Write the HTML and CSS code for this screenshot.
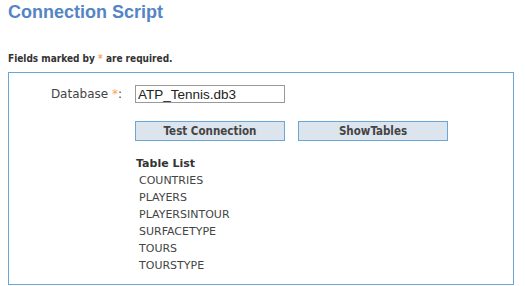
FILE: index.html
```html
<!DOCTYPE html>
<html>
<head>
  <link rel="stylesheet" href="styles.css">
</head>
<body>
  <h1 class="title">Connection Script</h1>
  <p class="note">Fields marked by <span class="req">*</span> are required.</p>
  <div class="panel">
    <div class="row">
      <label class="label" for="db">Database <span class="req">*</span>:</label>
      <input class="field" id="db" value="ATP_Tennis.db3">
    </div>
    <div class="buttons">
      <button class="btn">Test Connection</button>
      <button class="btn">ShowTables</button>
    </div>
    <div class="tables">
      <div class="tables-title">Table List</div>
      <div class="table-item">COUNTRIES</div>
      <div class="table-item">PLAYERS</div>
      <div class="table-item">PLAYERSINTOUR</div>
      <div class="table-item">SURFACETYPE</div>
      <div class="table-item">TOURS</div>
      <div class="table-item">TOURSTYPE</div>
    </div>
  </div>
</body>
</html>
```

FILE: styles.css
```css
body {
  margin: 0;
  padding: 0 12px 0 8px;
  background-color: white;
  color: #444;
  font-family: "DejaVu Sans", Verdana, sans-serif;
}

.title {
  margin: 2px 0 0 0;
  font-family: "Liberation Sans", Arial, sans-serif;
  font-size: 18px;
  line-height: 20px;
  font-weight: bold;
  color: #5485c6;
}

.note {
  margin: 31px 0 0 0;
  font-family: "DejaVu Sans Condensed", "DejaVu Sans", sans-serif;
  font-size: 10px;
  line-height: 12px;
  font-weight: bold;
  color: #333;
}

.req {
  color: #f7a35c;
}

.panel {
  margin-top: 7px;
  border: 1px solid #6aa6d6;
  padding: 12px 0 0 0;
  height: 199px;
}

.row {
  display: flex;
  align-items: center;
}

.label {
  width: 113px;
  padding-right: 13px;
  text-align: right;
  font-size: 12px;
  color: #444;
}

.field {
  box-sizing: border-box;
  width: 150px;
  height: 18px;
  margin: 0;
  padding: 0 2px;
  border: 1px solid #999;
  font-family: "Liberation Sans", Arial, sans-serif;
  font-size: 13.5px;
  color: #222;
  outline: none;
}

.buttons {
  display: flex;
  gap: 13px;
  margin: 18px 0 0 126px;
}

.btn {
  box-sizing: border-box;
  width: 150px;
  height: 20px;
  margin: 0;
  padding: 0;
  border: 1px solid #6aa6d6;
  background-color: #dce4ee;
  font-family: "DejaVu Sans Condensed", "DejaVu Sans", sans-serif;
  font-size: 11.5px;
  font-weight: bold;
  color: #444;
}

.tables {
  margin: 14px 0 0 127px;
  font-size: 11px;
  line-height: 17px;
}

.tables-title {
  font-weight: bold;
  color: #333;
}

.table-item {
  padding-left: 3px;
  color: #444;
}
```
